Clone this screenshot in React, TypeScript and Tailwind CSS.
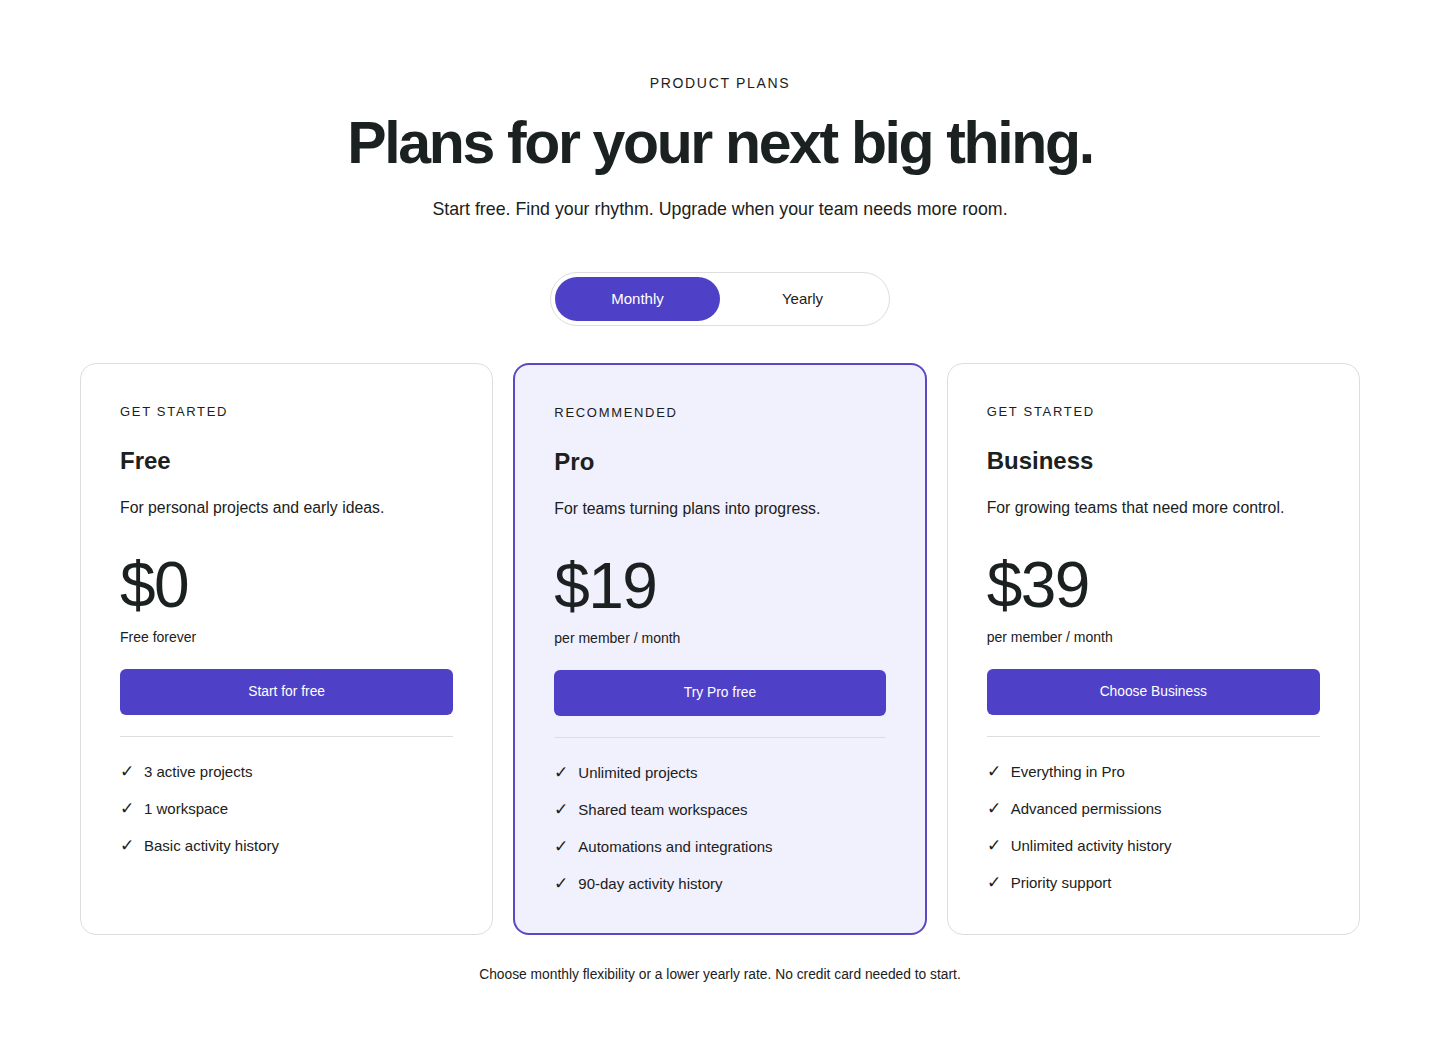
import React, { useState } from 'react';

interface Plan {
  label: string;
  name: string;
  description: string;
  price: string;
  period: string;
  cta: string;
  features: string[];
  featured?: boolean;
}

const plans: Plan[] = [
  {
    label: 'Get started',
    name: 'Free',
    description: 'For personal projects and early ideas.',
    price: '$0',
    period: 'Free forever',
    cta: 'Start for free',
    features: ['3 active projects', '1 workspace', 'Basic activity history'],
  },
  {
    label: 'Recommended',
    name: 'Pro',
    description: 'For teams turning plans into progress.',
    price: '$19',
    period: 'per member / month',
    cta: 'Try Pro free',
    features: ['Unlimited projects', 'Shared team workspaces', 'Automations and integrations', '90-day activity history'],
    featured: true,
  },
  {
    label: 'Get started',
    name: 'Business',
    description: 'For growing teams that need more control.',
    price: '$39',
    period: 'per member / month',
    cta: 'Choose Business',
    features: ['Everything in Pro', 'Advanced permissions', 'Unlimited activity history', 'Priority support'],
  },
];

function PlanCard({ plan }: { plan: Plan }) {
  return (
    <div
      className={`rounded-2xl px-[39px] pt-10 pb-[37px] ${
        plan.featured ? 'border-2 border-[#5a49c2] bg-[#f1f0fd]' : 'border border-[#dddddd] bg-white'
      }`}
    >
      <p className="text-[13px] leading-4 uppercase tracking-[0.13em] text-[#1b2120]">{plan.label}</p>
      <h3 className="mt-6 text-2xl leading-8 font-bold text-[#1b2120] translate-y-px">{plan.name}</h3>
      <p className="mt-5 text-[15.8px] leading-6 text-[#1b2120]">{plan.description}</p>
      <p className="mt-7 text-[64px] leading-[72px] tracking-tight text-[#1b2120] translate-y-px">{plan.price}</p>
      <p className="mt-[7px] text-sm leading-5 text-[#1b2120]">{plan.period}</p>
      <button className="mt-[22px] h-[46px] w-full rounded-md bg-[#4f41c7] text-[13.8px] text-white">
        {plan.cta}
      </button>
      <div className="mt-[21px] border-t border-[#dedede]" />
      <ul className="mt-[23px] flex flex-col gap-[13px]">
        {plan.features.map((f) => (
          <li key={f} className="flex items-center text-[15px] leading-6 text-[#1b2120]">
            <span className="w-6 shrink-0 text-[17px]">✓</span>
            <span>{f}</span>
          </li>
        ))}
      </ul>
    </div>
  );
}

export default function App() {
  const [billing, setBilling] = useState<'monthly' | 'yearly'>('monthly');

  return (
    <div className="min-h-screen bg-white font-['Liberation_Sans',Arial,sans-serif] text-[#1b2120]">
      <div className="mx-auto max-w-[1280px] pt-[75px] pb-16">
        <div className="flex flex-col items-center text-center">
          <p className="text-sm leading-4 uppercase tracking-[0.12em]">Product plans</p>
          <h1 className="mt-5 text-[59px] leading-[64px] font-bold tracking-[-0.04em]">Plans for your next big thing.</h1>
          <p className="mt-5 text-[17.8px] leading-7">Start free. Find your rhythm. Upgrade when your team needs more room.</p>

          <div className="mt-[49px] flex w-[340px] rounded-full border border-[#dddddd] bg-white p-1">
            <button
              onClick={() => setBilling('monthly')}
              className={`h-11 flex-1 rounded-full text-[15px] ${
                billing === 'monthly' ? 'bg-[#4f41c7] text-white' : 'text-[#1b2120]'
              }`}
            >
              Monthly
            </button>
            <button
              onClick={() => setBilling('yearly')}
              className={`h-11 flex-1 rounded-full text-[15px] ${
                billing === 'yearly' ? 'bg-[#4f41c7] text-white' : 'text-[#1b2120]'
              }`}
            >
              Yearly
            </button>
          </div>
        </div>

        <div className="mt-[37px] grid grid-cols-3 gap-5">
          {plans.map((p) => (
            <PlanCard key={p.name} plan={p} />
          ))}
        </div>

        <p className="mt-[30px] text-center text-[13.8px] leading-5">
          Choose monthly flexibility or a lower yearly rate. No credit card needed to start.
        </p>
      </div>
    </div>
  );
}
